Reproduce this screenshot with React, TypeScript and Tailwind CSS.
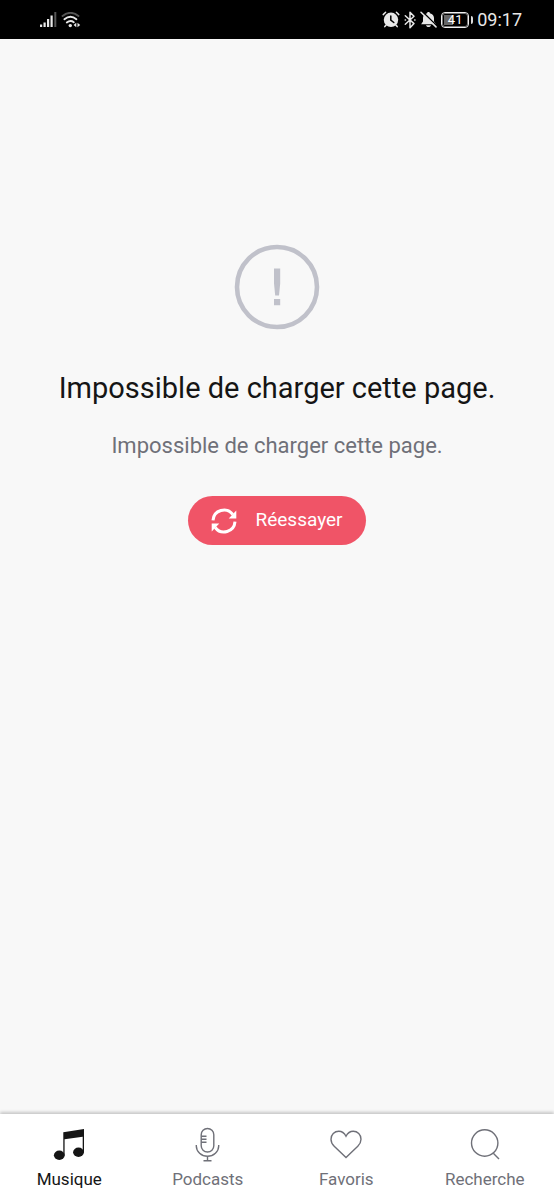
import type { ReactNode } from "react";

function SignalIcon() {
  return (
    <svg viewBox="0 0 17 16" className="h-4 w-[17px]" fill="#e8e8e8" aria-hidden="true">
      <rect x="0" y="12.5" width="2.2" height="2.5" />
      <rect x="3.5" y="10.5" width="2.2" height="4.500" />
      <rect x="7" y="7" width="2.2" height="8" />
      <rect x="10.500" y="3.500" width="2.2" height="11.500" />
      <rect x="14.300" y="0" width="2" height="15" fill="#555" />
    </svg>
  );
}

function WifiIcon() {
  return (
    <svg viewBox="0 0 20 16" className="h-4 w-5" fill="none" strokeWidth="1.9" strokeLinecap="round" aria-hidden="true">
      <path d="M1.500 4Q9.500 -2.300 17.500 4" stroke="#555" />
      <path d="M3.400 7.200Q9.500 2.300 15.400 7.200" stroke="#e8e8e8" />
      <path d="M5.800 10.500Q9.500 7.600 12.800 10.200" stroke="#e8e8e8" />
      <circle cx="9.300" cy="13.600" r="1.700" fill="#e8e8e8" />
      <path d="M15.300 10.800v4.400L12.600 13zM16.500 10.800v4.400l2.700-2.200z" fill="#e8e8e8" />
    </svg>
  );
}

function AlarmIcon() {
  return (
    <svg viewBox="0 0 18 17" className="h-[17px] w-[18px]" fill="none" strokeLinecap="round" aria-hidden="true">
      <circle cx="9" cy="8.800" r="7.200" fill="#e8e8e8" />
      <path d="M1.200 3.600L3.600 1.300M16.800 3.600L14.400 1.300M4 14.200L2.800 15.600M14 14.200L15.200 15.600" stroke="#e8e8e8" strokeWidth="1.500" />
      <path d="M8.800 5v4.200l3 2.300" stroke="#000" strokeWidth="1.500" />
    </svg>
  );
}

function BluetoothIcon() {
  return (
    <svg viewBox="0 0 12 18" className="h-[18px] w-3" fill="none" stroke="#e8e8e8" strokeWidth="1.500" strokeLinejoin="round" strokeLinecap="round" aria-hidden="true">
      <path d="M1.300 4.800L10 12.600L6 16.800V1.200L10 5.200L1.300 13.200" />
      <path d="M1.200 9h.3M10.700 9h.3" />
    </svg>
  );
}

function BellOffIcon() {
  return (
    <svg viewBox="0 0 17 17" className="h-[17px] w-[17px]" aria-hidden="true">
      <path d="M8.500 1c.8 0 1.400.5 1.400 1.200 2.700.7 4.100 2.400 4.100 4.800v3.600l1.900 2.600H1.100L3 10.600V7c0-2.400 1.400-4.100 4.100-4.800C7.100 1.500 7.700 1 8.500 1zM6 14.300h5c-.3 1.200-1.200 1.800-2.500 1.800S6.300 15.500 6 14.300z" fill="#e8e8e8" />
      <path d="M2.200.4L17 15" stroke="#000" strokeWidth="1.500" />
      <path d="M1 1.200L16 15.900" stroke="#e8e8e8" strokeWidth="1.500" strokeLinecap="round" />
    </svg>
  );
}

function Battery({ level }: { level: number }) {
  return (
    <span className="flex items-center gap-0.5">
      <span className="flex h-4 w-7 rounded-[4px] border border-[#f0f0f0] p-0.5 outline-1 -outline-offset-2 outline-[#777]">
        <span className="relative flex flex-1 items-center justify-center">
          <span className="absolute inset-y-0 left-0 bg-[#666]" style={{ width: `${level}%` }} />
          <span className="relative text-[13px] leading-none text-white">{level}</span>
        </span>
      </span>
      <span className="h-2 w-0.5 rounded-r bg-[#dcdcdc]" />
    </span>
  );
}

function AlertIcon() {
  return (
    <svg viewBox="0 0 86 86" className="h-[86px] w-[86px]" aria-hidden="true">
      <circle cx="43" cy="43" r="40" fill="none" stroke="#c0c1ca" strokeWidth="4.600" />
      <path d="M40 24.500h6.200v15l-1.200 12h-3.800l-1.200-12zM40 55h6.200v6.200H40z" fill="#c0c1ca" />
    </svg>
  );
}

function RefreshIcon() {
  return (
    <svg viewBox="0 0 26 26" className="h-[26px] w-[26px]" aria-hidden="true">
      <g fill="none" stroke="#fff" strokeWidth="3">
        <path d="M2 12.300A11 11 0 0 1 21.800 6.500" />
        <path d="M24 13.700A11 11 0 0 1 4.200 19.500" />
      </g>
      <path d="M25.300 2.600v7.800h-7.600zM.7 23.400v-7.800h7.600z" fill="#fff" />
    </svg>
  );
}

function NavIcon({ children }: { children: ReactNode }) {
  return (
    <svg viewBox="0 0 36 36" className="h-9 w-9" fill="none" stroke="currentColor" strokeWidth="1.400" aria-hidden="true">
      {children}
    </svg>
  );
}

const tabs = [
  {
    label: "Musique",
    active: true,
    icon: (
      <NavIcon>
        <g fill="currentColor" stroke="none">
          <path d="M12.300 5.300L33 2v23.500h-1.300V9.800L13.600 12.300v16h-1.300z" />
          <ellipse cx="8.300" cy="28.300" rx="5.400" ry="4.700" />
          <ellipse cx="27.500" cy="25.300" rx="5.400" ry="4.700" />
        </g>
      </NavIcon>
    ),
  },
  {
    label: "Podcasts",
    active: false,
    icon: (
      <NavIcon>
        <rect x="11.200" y="1.500" width="12.600" height="23.500" rx="6.300" />
        <path d="M6.300 18v1a11.200 10.200 0 0 0 22.400 0v-1M17.500 29.200v4.500M13.500 33.700h8M11.200 9.300h5.300M11.200 12.300h5.300M11.200 15.300h5.300" />
      </NavIcon>
    ),
  },
  {
    label: "Favoris",
    active: false,
    icon: (
      <NavIcon>
        <path d="M18 9.300C16.300 6 14 4.300 10.800 4.300C6.400 4.300 3 7.700 3 12.200c0 3 1.200 5 3.200 7L18 30.500l11.800-11.300c2-2 3.200-4 3.200-7c0-4.500-3.400-7.900-7.800-7.900C22 4.300 19.700 6 18 9.300z" />
      </NavIcon>
    ),
  },
  {
    label: "Recherche",
    active: false,
    icon: (
      <NavIcon>
        <circle cx="17.700" cy="16" r="13.200" />
        <path d="M26.300 26.300L32 32" />
      </NavIcon>
    ),
  },
];

export default function App() {
  return (
    <div className="flex min-h-screen flex-col bg-[#f8f8f8] font-['Roboto',sans-serif]">
      <header className="flex h-[39px] items-center justify-between bg-black pr-8 pl-10">
        <div className="flex items-center gap-1">
          <SignalIcon />
          <WifiIcon />
        </div>
        <div className="flex items-center gap-1">
          <AlarmIcon />
          <BluetoothIcon />
          <BellOffIcon />
          <Battery level={41} />
          <time className="text-[18px] leading-6 text-[#e8e8e8]">09:17</time>
        </div>
      </header>

      <main className="flex flex-1 flex-col items-center px-6 pt-[205px] text-center">
        <AlertIcon />
        <h1 className="mt-10 text-[29px] leading-9 text-[#151515]">Impossible de charger cette page.</h1>
        <p className="mt-[26px] text-[22px] leading-7 text-[#6f7078]">Impossible de charger cette page.</p>
        <button type="button" className="mt-9 flex h-[49px] items-center gap-[18px] rounded-full bg-[#f05467] px-[23px] text-[19px] text-white">
          <RefreshIcon />
          Réessayer
        </button>
      </main>

      <nav className="grid h-[86px] grid-cols-4 bg-white shadow-[0_-2px_3px_rgba(0,0,0,0.2)]">
        {tabs.map((tab) => (
          <a
            key={tab.label}
            href="#"
            aria-current={tab.active ? "page" : undefined}
            className={
              tab.active
                ? "flex flex-col items-center gap-1 pt-[13px] text-[17px] leading-6 text-[#151515]"
                : "flex flex-col items-center gap-1 pt-[13px] text-[17px] leading-6 text-[#6f7078]"
            }
          >
            {tab.icon}
            {tab.label}
          </a>
        ))}
      </nav>
    </div>
  );
}
